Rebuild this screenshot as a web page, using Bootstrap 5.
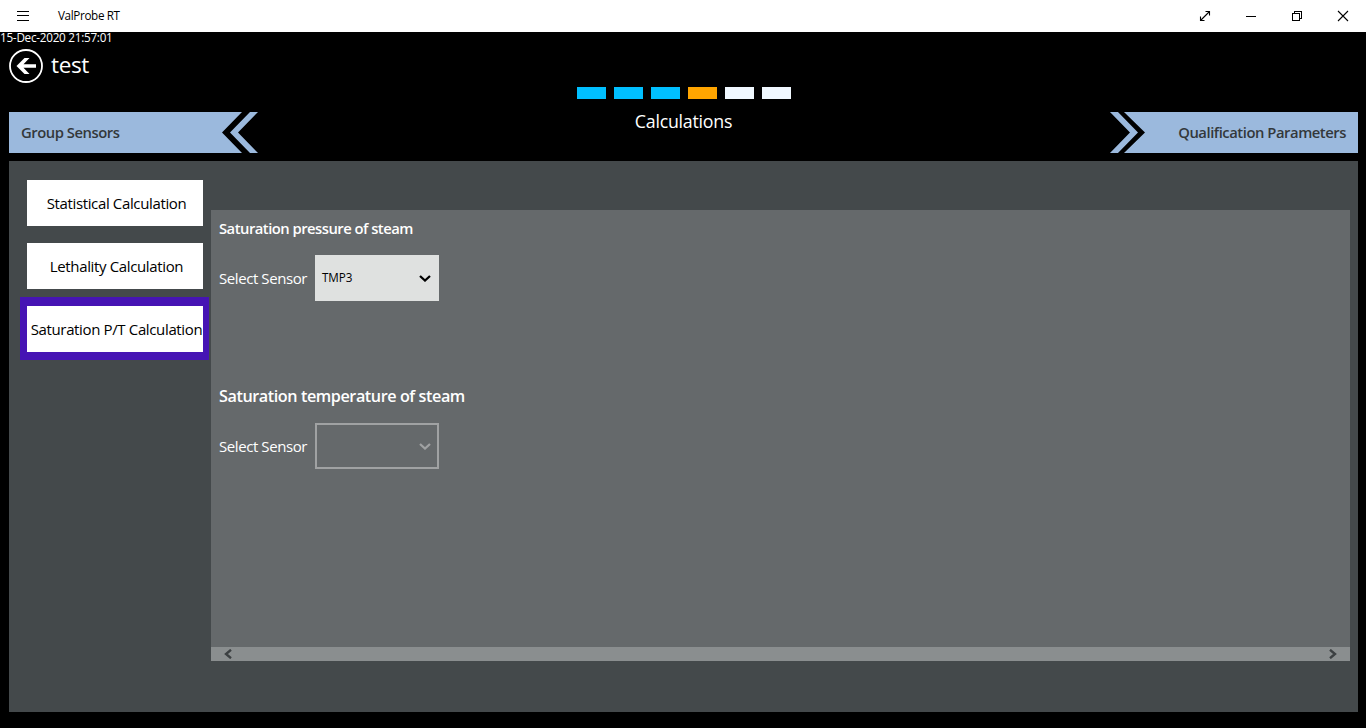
<!DOCTYPE html>
<html lang="en">
<head>
<meta charset="utf-8">
<meta name="viewport" content="width=device-width, initial-scale=1">
<title>ValProbe RT</title>
<link href="https://cdn.jsdelivr.net/npm/bootstrap@5.3.0/dist/css/bootstrap.min.css" rel="stylesheet">
<style>
body{background:#000;font-family:"Open Sans","Noto Sans",sans-serif;font-size:15px;line-height:20px;color:#fff;white-space:nowrap}
svg{display:block;flex:none}
button{font:inherit}
.titlebar{height:32px;background:#fff;color:#000;padding:0 17px}
.app-name{font-size:11.7px;letter-spacing:-.36px;margin-left:29px;padding-bottom:2px}
.win-controls{gap:34px}
.stamp{height:12px;line-height:10px;font-size:11.7px;letter-spacing:-.25px}
.heading{height:43px;padding-left:9px;gap:8px}
.heading h1{font-size:22.5px;line-height:30px;font-weight:400;letter-spacing:-.35px;padding-bottom:2px}
.steps{height:25px;gap:8px;padding-left:2px}
.step{width:29px;height:12px;background:#f0f8ff}
.step-done{background:#00bfff}
.step-now{background:#ffa500}
.wizard{height:41px;margin:0 8px 8px 9px}
.page-title{font-size:17.8px;line-height:18px;letter-spacing:-.25px}
.wiz-btn{width:249px;height:41px;background:#9bb9dd;color:#33383b;font-size:14.8px;font-weight:600;letter-spacing:-.46px;padding:0 12px 2px}
.wiz-prev{clip-path:polygon(0 0,233px 0,213px 20.5px,233px 100%,241px 100%,221px 20.5px,241px 0,249px 0,229px 20.5px,249px 100%,0 100%)}
.wiz-next{clip-path:polygon(1px 0,9px 0,29px 20.5px,9px 100%,15px 100%,36px 20.5px,15px 0,100% 0,100% 100%,1px 100%,21px 20.5px)}
.stage{background:#44494b;margin:0 8px 16px 9px;padding-right:8px}
.side{width:202px;padding:10px 0 0 11px}
.tab-btn{width:189px;height:63px;border:solid transparent;border-width:9px 6px 8px 7px;background:#fff padding-box;color:#000;padding:0 0 1px 3px;letter-spacing:-.36px}
.tab-btn.active{border-color:#4614b4}
.pane{background:#65696b;margin:49px 0 51px}
.pane-body{padding:9px 8px}
.pane h2{font-size:14.8px;line-height:18px;font-weight:600;letter-spacing:-.52px;margin-bottom:18px}
.pane h2.group-gap{font-size:16.2px;line-height:20px;letter-spacing:-.43px;margin:85px 0 17px}
.field-row{height:46px;gap:8px}
.field-label{width:88px;letter-spacing:-.42px}
.picker{width:124px;height:46px;padding:0 8px 0 7px;background:#dfe1e0;color:#000;font-size:11.7px;letter-spacing:-.1px;border:0}
.picker span{padding-bottom:2px}
.picker-off{background:transparent;border:2px solid #a0a2a3;padding-right:6px;color:#a0a2a3}
.hscroll{height:14px;background:#8a8e8f;padding:0 12px;color:#3c4042}
</style>
<script src="https://cdn.jsdelivr.net/npm/bootstrap@5.3.0/dist/js/bootstrap.bundle.min.js"></script>
</head>
<body class="vh-100 d-flex flex-column overflow-hidden m-0">
<header class="titlebar d-flex align-items-center">
  <svg width="12" height="10" stroke="#000" shape-rendering="crispEdges"><path d="M0 .5h12M0 4.5h12M0 9.5h12"/></svg>
  <span class="app-name">ValProbe RT</span>
  <div class="win-controls d-flex align-items-center ms-auto">
    <svg width="12" height="12" fill="none" stroke="#000"><path d="M1.5 10.5l9-9M6.5 1.5h4v4M1.5 6.5v4h4" stroke-width="1.1"/></svg>
    <svg width="12" height="12" stroke="#000" shape-rendering="crispEdges"><path d="M1 6.5h10"/></svg>
    <svg width="12" height="12" fill="none" stroke="#000" shape-rendering="crispEdges"><path d="M1.500 3.500h7v7h-7zM3.500 3.500v-2h7v7h-2"/></svg>
    <svg width="12" height="12" stroke="#000"><path d="M1 1l10 10M11 1L1 11" stroke-width="1.1"/></svg>
  </div>
</header>
<div class="stamp">15-Dec-2020 21:57:01</div>
<div class="heading d-flex align-items-center">
  <svg width="34" height="34"><circle cx="17" cy="17" r="16" fill="none" stroke="#fff" stroke-width="1.8"/><path d="M7.500 17L15.500 9h5l-6 6.200H27v3.600H14.500l6 6.200h-5z" fill="#fff"/></svg>
  <h1 class="mb-0">test</h1>
</div>
<div class="steps d-flex justify-content-center">
  <div class="step step-done"></div><div class="step step-done"></div><div class="step step-done"></div><div class="step step-now"></div><div class="step"></div><div class="step"></div>
</div>
<nav class="wizard d-flex justify-content-between align-items-start">
  <div class="wiz-btn wiz-prev d-flex align-items-center">Group Sensors</div>
  <div class="page-title">Calculations</div>
  <div class="wiz-btn wiz-next d-flex align-items-center justify-content-end">Qualification Parameters</div>
</nav>
<main class="stage d-flex flex-grow-1">
  <aside class="side d-flex flex-column flex-shrink-0">
    <button class="tab-btn">Statistical Calculation</button>
    <button class="tab-btn">Lethality Calculation</button>
    <button class="tab-btn active">Saturation P/T Calculation</button>
  </aside>
  <section class="pane d-flex flex-column flex-grow-1">
    <div class="pane-body flex-grow-1">
      <h2>Saturation pressure of steam</h2>
      <div class="field-row d-flex align-items-center">
        <span class="field-label">Select Sensor</span>
        <button class="picker d-flex align-items-center justify-content-between"><span>TMP3</span><svg width="12" height="8" fill="none" stroke="currentColor" stroke-width="2.300"><path d="M1 2l5 4.500L11 2"/></svg></button>
      </div>
      <h2 class="group-gap">Saturation temperature of steam</h2>
      <div class="field-row d-flex align-items-center">
        <span class="field-label">Select Sensor</span>
        <button class="picker picker-off d-flex align-items-center justify-content-end" disabled aria-label="Sensor"><svg width="12" height="8" fill="none" stroke="currentColor" stroke-width="2.300"><path d="M1 2l5 4.500L11 2"/></svg></button>
      </div>
    </div>
    <div class="hscroll d-flex align-items-center justify-content-between">
      <svg width="10" height="10" fill="none" stroke="currentColor" stroke-width="2.400"><path d="M8 .8L3 5l5 4.200"/></svg>
      <svg width="10" height="10" fill="none" stroke="currentColor" stroke-width="2.400"><path d="M2 .8L7 5l-5 4.200"/></svg>
    </div>
  </section>
</main>
</body>
</html>
